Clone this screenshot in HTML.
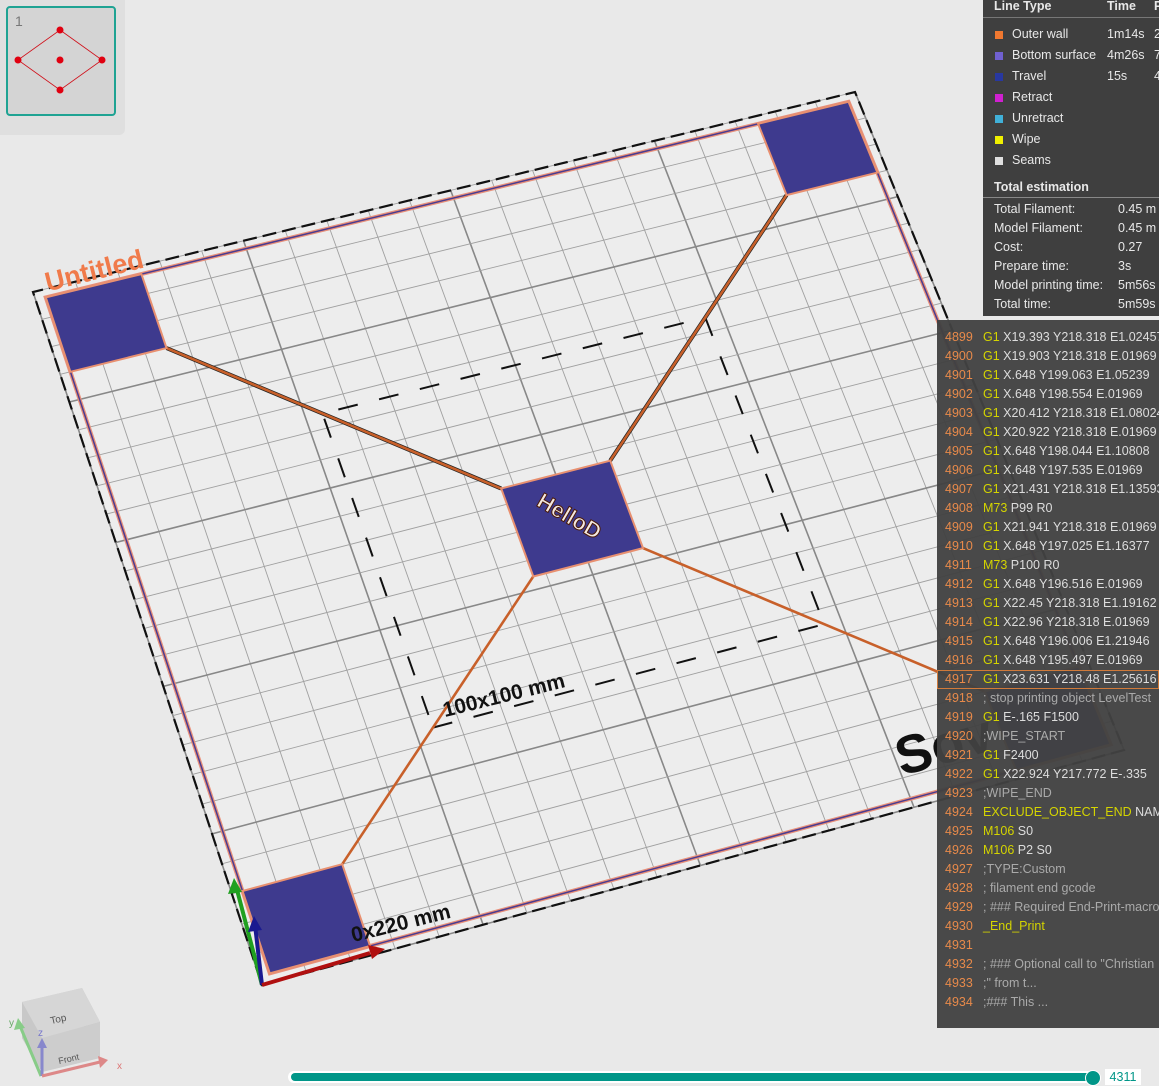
<!DOCTYPE html>
<html><head><meta charset="utf-8"><style>
body{margin:0;width:1159px;height:1086px;overflow:hidden;background:#e9e9e9;font-family:"Liberation Sans","Noto Sans CJK SC",sans-serif;position:relative}
svg{position:absolute;left:0;top:0}
.legend{position:absolute;left:983px;top:0;width:176px;height:316px;background:#3f3f3f;color:#e8e8e8;font-size:12.5px}
.legend .h{font-weight:bold;padding:0 0 0 11px;height:16px;line-height:13px;border-bottom:1px solid #888;position:relative}
.legend .r{height:21px;line-height:21px;position:relative;padding-left:29px}
.legend .sw{position:absolute;left:12px;top:7px;width:8px;height:8px}
.legend .t{position:absolute;left:124px}
.legend .p{position:absolute;left:171px}
.est .r2{height:19px;line-height:19px;padding-left:11px;position:relative}
.est .v{position:absolute;left:135px}
.gc{position:absolute;left:937px;top:320px;width:222px;height:700px;background:rgba(66,66,66,0.96);font-size:12.5px;color:#ddd;white-space:nowrap;overflow:hidden}
.gc div{height:19px;line-height:19px;padding-left:8px;position:relative}
.gc .n{color:#e88a4a;display:inline-block;width:38px}
.gc .k{color:#d4d400}
.gc .c{color:#aaa}
.gc .sel{outline:1px solid #d07a3a;outline-offset:-1px}
</style></head><body>
<svg id="s" width="1159" height="1086" viewBox="0 0 1159 1086"></svg>

<div style="position:absolute;left:0;top:0;width:125px;height:135px;background:#dfdfdf;border-radius:0 0 6px 0"></div>
<div style="position:absolute;left:6px;top:6px;width:106px;height:106px;border:2px solid #1fa393;border-radius:4px;background:#d4d4d4"></div>
<div style="position:absolute;left:15px;top:13px;color:#777;font-size:14px">1</div>
<svg width="125" height="135" style="position:absolute;left:0;top:0">
<polygon points="60,30 102,60 60,90 18,60" fill="none" stroke="#d0101a" stroke-width="0.8"/>
<g fill="#e00010"><circle cx="60" cy="30" r="3.5"/><circle cx="102" cy="60" r="3.5"/><circle cx="60" cy="90" r="3.5"/><circle cx="18" cy="60" r="3.5"/><circle cx="60" cy="60" r="3.5"/></g>
</svg>

<div class="legend">
<div class="h" style="border:none;height:14px">Line Type<span style="position:absolute;left:124px">Time</span><span style="position:absolute;left:171px">P</span></div>
<div style="border-top:1px solid #777;margin-top:3px;height:6px"></div>
<div class="r"><span class="sw" style="background:#f07830"></span>Outer wall<span class="t">1m14s</span><span class="p">2</span></div>
<div class="r"><span class="sw" style="background:#7060d0"></span>Bottom surface<span class="t">4m26s</span><span class="p">7</span></div>
<div class="r"><span class="sw" style="background:#2838a0"></span>Travel<span class="t">15s</span><span class="p">4</span></div>
<div class="r"><span class="sw" style="background:#d020d0"></span>Retract</div>
<div class="r"><span class="sw" style="background:#40b0d8"></span>Unretract</div>
<div class="r"><span class="sw" style="background:#f0f000"></span>Wipe</div>
<div class="r"><span class="sw" style="background:#e0e0e0"></span>Seams</div>
<div style="height:9px"></div>
<div class="h" style="height:17px;line-height:15px">Total estimation</div>
<div class="est" style="padding-top:2px">
<div class="r2">Total Filament:<span class="v">0.45 m</span></div>
<div class="r2">Model Filament:<span class="v">0.45 m</span></div>
<div class="r2">Cost:<span class="v">0.27</span></div>
<div class="r2">Prepare time:<span class="v">3s</span></div>
<div class="r2">Model printing time:<span class="v">5m56s</span></div>
<div class="r2">Total time:<span class="v">5m59s</span></div>
</div>
</div>

<div class="gc" style="padding-top:8px">
<div><span class="n">4899</span><span class="k">G1</span> X19.393 Y218.318 E1.02457</div>
<div><span class="n">4900</span><span class="k">G1</span> X19.903 Y218.318 E.01969</div>
<div><span class="n">4901</span><span class="k">G1</span> X.648 Y199.063 E1.05239</div>
<div><span class="n">4902</span><span class="k">G1</span> X.648 Y198.554 E.01969</div>
<div><span class="n">4903</span><span class="k">G1</span> X20.412 Y218.318 E1.08024</div>
<div><span class="n">4904</span><span class="k">G1</span> X20.922 Y218.318 E.01969</div>
<div><span class="n">4905</span><span class="k">G1</span> X.648 Y198.044 E1.10808</div>
<div><span class="n">4906</span><span class="k">G1</span> X.648 Y197.535 E.01969</div>
<div><span class="n">4907</span><span class="k">G1</span> X21.431 Y218.318 E1.13593</div>
<div><span class="n">4908</span><span class="k">M73</span> P99 R0</div>
<div><span class="n">4909</span><span class="k">G1</span> X21.941 Y218.318 E.01969</div>
<div><span class="n">4910</span><span class="k">G1</span> X.648 Y197.025 E1.16377</div>
<div><span class="n">4911</span><span class="k">M73</span> P100 R0</div>
<div><span class="n">4912</span><span class="k">G1</span> X.648 Y196.516 E.01969</div>
<div><span class="n">4913</span><span class="k">G1</span> X22.45 Y218.318 E1.19162</div>
<div><span class="n">4914</span><span class="k">G1</span> X22.96 Y218.318 E.01969</div>
<div><span class="n">4915</span><span class="k">G1</span> X.648 Y196.006 E1.21946</div>
<div><span class="n">4916</span><span class="k">G1</span> X.648 Y195.497 E.01969</div>
<div class="sel"><span class="n">4917</span><span class="k">G1</span> X23.631 Y218.48 E1.25616</div>
<div><span class="n">4918</span><span class="c">; stop printing object LevelTest</span></div>
<div><span class="n">4919</span><span class="k">G1</span> E-.165 F1500</div>
<div><span class="n">4920</span><span class="c">;WIPE_START</span></div>
<div><span class="n">4921</span><span class="k">G1</span> F2400</div>
<div><span class="n">4922</span><span class="k">G1</span> X22.924 Y217.772 E-.335</div>
<div><span class="n">4923</span><span class="c">;WIPE_END</span></div>
<div><span class="n">4924</span><span class="k">EXCLUDE_OBJECT_END</span> NAME</div>
<div><span class="n">4925</span><span class="k">M106</span> S0</div>
<div><span class="n">4926</span><span class="k">M106</span> P2 S0</div>
<div><span class="n">4927</span><span class="c">;TYPE:Custom</span></div>
<div><span class="n">4928</span><span class="c">; filament end gcode</span></div>
<div><span class="n">4929</span><span class="c">; ### Required End-Print-macro</span></div>
<div><span class="n">4930</span><span class="k">_End_Print</span></div>
<div><span class="n">4931</span></div>
<div><span class="n">4932</span><span class="c">; ### Optional call to "Christian</span></div>
<div><span class="n">4933</span><span class="c">;" from t...</span></div>
<div><span class="n">4934</span><span class="c">;### This ...</span></div>
</div>

<div style="position:absolute;left:288px;top:1071px;width:808px;height:12px;background:#fff;border-radius:6px"></div>
<div style="position:absolute;left:291px;top:1073px;width:800px;height:8px;background:#009688;border-radius:4px"></div>
<div style="position:absolute;left:1085px;top:1070px;width:14px;height:14px;background:#009688;border-radius:50%;border:1px solid #fff"></div>
<div style="position:absolute;left:1105px;top:1069px;width:36px;height:16px;background:#fff;color:#009688;font-size:12.5px;line-height:16px;text-align:center">4311</div>

<svg width="140" height="100" style="position:absolute;left:0;top:986px">
<polygon points="22,52 82,38 100,72 42,86" fill="#d8d8d8"/>
<polygon points="22,52 82,38 82,2 22,16" fill="#cfcfcf"/>
<polygon points="82,38 100,72 100,36 82,2" fill="#c4c4c4"/>
<polygon points="22,16 82,2 100,36 42,52" fill="#d6d6d6"/>
<polygon points="42,52 100,36 100,72 42,86" fill="#cdcdcd"/>
<polygon points="22,16 42,52 42,86 22,52" fill="#c8c8c8"/>
<text x="50" y="36" font-size="10" fill="#555" transform="rotate(-13 60 32)">Top</text>
<text x="58" y="76" font-size="9" fill="#555" transform="rotate(-13 68 72)">Front</text>
<line x1="41" y1="90" x2="20" y2="40" stroke="#8c8" stroke-width="3"/><polygon points="18,32 14,44 25,42" fill="#8c8"/>
<line x1="42" y1="90" x2="42" y2="60" stroke="#88c" stroke-width="3"/><polygon points="42,52 37,62 47,62" fill="#88c"/>
<line x1="42" y1="90" x2="100" y2="76" stroke="#d88" stroke-width="3"/><polygon points="108,74 98,70 100,82" fill="#d88"/>
<text x="9" y="40" font-size="10" fill="#6a6">y</text><text x="38" y="50" font-size="10" fill="#77c">z</text><text x="117" y="83" font-size="10" fill="#d77">x</text>
</svg>

<script>
var C=[[262,985],[1124,750],[855,92],[33,292]];
function solve(A,b){var n=b.length;for(var i=0;i<n;i++){var m=i;for(var j=i+1;j<n;j++)if(Math.abs(A[j][i])>Math.abs(A[m][i]))m=j;var t=A[i];A[i]=A[m];A[m]=t;t=b[i];b[i]=b[m];b[m]=t;for(j=i+1;j<n;j++){var f=A[j][i]/A[i][i];for(var k=i;k<n;k++)A[j][k]-=f*A[i][k];b[j]-=f*b[i];}}var x=[];for(i=n-1;i>=0;i--){var s=b[i];for(j=i+1;j<n;j++)s-=A[i][j]*x[j];x[i]=s/A[i][i];}return x;}
var S=[[0,0],[1,0],[1,1],[0,1]],A=[],B=[];
for(var i=0;i<4;i++){var x=S[i][0],y=S[i][1],u=C[i][0],v=C[i][1];A.push([x,y,1,0,0,0,-u*x,-u*y]);B.push(u);A.push([0,0,0,x,y,1,-v*x,-v*y]);B.push(v);}
var h=solve(A,B);
function P(x,y){var w=h[6]*x+h[7]*y+1;return [(h[0]*x+h[1]*y+h[2])/w,(h[3]*x+h[4]*y+h[5])/w];}
function pt(x,y){var p=P(x,y);return p[0].toFixed(1)+','+p[1].toFixed(1);}
function ln(a,b,c,d,col,w,extra){var p=P(a,b),q=P(c,d);return '<line x1="'+p[0]+'" y1="'+p[1]+'" x2="'+q[0]+'" y2="'+q[1]+'" stroke="'+col+'" stroke-width="'+w+'" '+(extra||'')+'/>';}
var o='';
o+='<polygon points="'+pt(0,0)+' '+pt(1,0)+' '+pt(1,1)+' '+pt(0,1)+'" fill="#ededed"/>';
var NX=20,NY=24;
for(var k=0;k<=NX;k++){var mj=(k%5==0);o+=ln(k/NX,0,k/NX,1,mj?'#888':'#a0a0a0',mj?1.6:0.9);}
for(k=0;k<=NY;k++){var mj=(k%5==0);o+=ln(0,k/NY,1,k/NY,mj?'#888':'#a0a0a0',mj?1.6:0.9);}
o+='<polygon points="'+pt(0,0)+' '+pt(1,0)+' '+pt(1,1)+' '+pt(0,1)+'" fill="none" stroke="#111" stroke-width="2.2" stroke-dasharray="14,6"/>';
var e=0.012;
o+='<polygon points="'+pt(e,e)+' '+pt(1-e,e)+' '+pt(1-e,1-e)+' '+pt(e,1-e)+'" fill="none" stroke="#e8907a" stroke-width="4"/>';
o+='<polygon points="'+pt(e,e)+' '+pt(1-e,e)+' '+pt(1-e,1-e)+' '+pt(e,1-e)+'" fill="none" stroke="#4a3c90" stroke-width="1.5"/>';
o+='<polygon points="'+pt(.27,.27)+' '+pt(.73,.27)+' '+pt(.73,.73)+' '+pt(.27,.73)+'" fill="none" stroke="#111" stroke-width="2" stroke-dasharray="20,22"/>';
var a=0.125,c1=0.435,c2=0.565;
var ctr=[[a,a],[1-a,a],[1-a,1-a],[a,1-a]],cc=[[c1,c1],[c2,c1],[c2,c2],[c1,c2]];
for(i=0;i<4;i++){if(i>=2)o+=ln(ctr[i][0],ctr[i][1],cc[i][0],cc[i][1],'#222',4);o+=ln(ctr[i][0],ctr[i][1],cc[i][0],cc[i][1],'#c8602a',2.6);}
function pad(a1,b1,a2,b2){o+='<polygon points="'+pt(a1,b1)+' '+pt(a2,b1)+' '+pt(a2,b2)+' '+pt(a1,b2)+'" fill="#3e3a8e" stroke="#e89070" stroke-width="2"/>';}
pad(e,e,a,a);pad(1-a,e,1-e,a);pad(1-a,1-a,1-e,1-e);pad(e,1-a,a,1-e);pad(c1,c1,c2,c2);
var cp=P(.5,.5);
document.getElementById('s').innerHTML=o+
'<text x="'+(cp[0]-38)+'" y="'+(cp[1]+7)+'" font-size="22" font-weight="bold" fill="#f4e8e0" stroke="#4a1a08" stroke-width="1" transform="rotate(30 '+cp[0]+' '+cp[1]+')">HelloD</text>'+
'<text x="42" y="278" font-size="27" font-weight="bold" fill="#f07a4a" transform="rotate(-14 100 262)">Untitled</text>'+
'<text x="440" y="703" font-size="21" font-weight="bold" fill="#111" transform="rotate(-14 500 690)">100x100 mm</text>'+
'<text x="348" y="930" font-size="21" font-weight="bold" fill="#111" transform="rotate(-14 400 915)">0x220 mm</text>'+
'<text x="895" y="770" font-size="54" font-weight="bold" fill="#111" transform="rotate(-16 920 750)">Sov</text>'+
'<line x1="262" y1="985" x2="236" y2="886" stroke="#20a020" stroke-width="4"/><polygon points="234,878 228,894 242,892" fill="#20a020"/>'+
'<line x1="262" y1="985" x2="255" y2="925" stroke="#1a1a90" stroke-width="4"/><polygon points="254,916 248,932 262,930" fill="#1a1a90"/>'+
'<line x1="262" y1="985" x2="370" y2="953" stroke="#b01010" stroke-width="4"/><polygon points="385,949 368,945 372,959" fill="#b01010"/>';
</script>
</body></html>
